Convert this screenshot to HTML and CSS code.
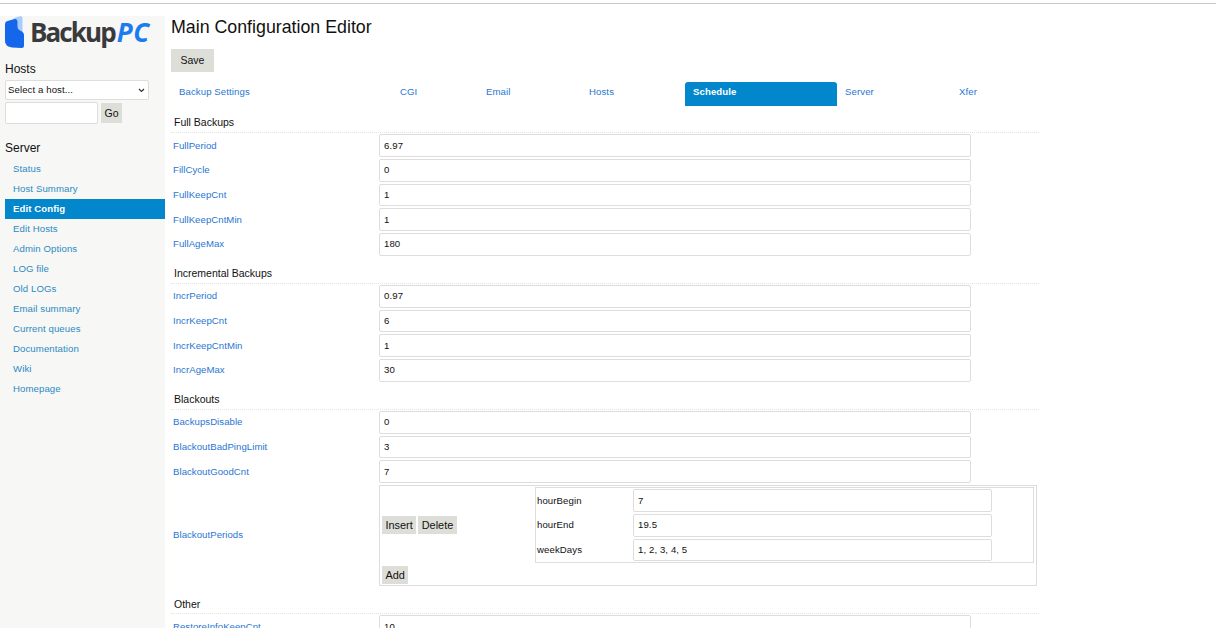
FILE: index.html
```html
<!DOCTYPE html>
<html lang="en">
<head>
<meta charset="utf-8">
<title>Main Configuration Editor</title>
<link rel="stylesheet" href="styles.css">
</head>
<body>
<div class="layout">
  <aside class="sidebar">
    <div class="logo">
      <svg class="logo-icon" width="20" height="33" viewBox="0 0 20 33">
        <path fill="#a9cdfb" d="M9 2 L15 .3 Q17.5 -.3 17.5 2 L17.5 16 L9 16z"/>
        <path fill="#1467ea" d="M0 8 Q0 5.5 2.5 5 L9.5 3 Q12.5 2.5 12.5 5.5 L12.5 11 Q12.5 13.5 15 14.5 L17 15.5 Q19 16.5 19 19 L19 29.5 Q19 32 16.5 32 L7 31.5 Q0 30.5 0 25z"/>
      </svg>
      <span class="logo-text">Backup<em>PC</em></span>
    </div>
    <h2 class="side-title">Hosts</h2>
    <select class="host-select"><option>Select a host...</option></select>
    <div class="host-go">
      <input class="host-input" type="text">
      <button class="btn go">Go</button>
    </div>
    <h2 class="side-title server">Server</h2>
    <nav class="nav">
      <a href="#">Status</a>
      <a href="#">Host Summary</a>
      <a href="#" class="active">Edit Config</a>
      <a href="#">Edit Hosts</a>
      <a href="#">Admin Options</a>
      <a href="#">LOG file</a>
      <a href="#">Old LOGs</a>
      <a href="#">Email summary</a>
      <a href="#">Current queues</a>
      <a href="#">Documentation</a>
      <a href="#">Wiki</a>
      <a href="#">Homepage</a>
    </nav>
  </aside>
  <main class="main">
    <h1 class="title">Main Configuration Editor</h1>
    <button class="btn save">Save</button>
    <div class="tabs">
      <a href="#">Backup Settings</a>
      <a href="#">CGI</a>
      <a href="#">Email</a>
      <a href="#">Hosts</a>
      <a href="#" class="active">Schedule</a>
      <a href="#">Server</a>
      <a href="#">Xfer</a>
    </div>

    <h3 class="section first">Full Backups</h3>
    <div class="row"><a href="#">FullPeriod</a><input value="6.97"></div>
    <div class="row"><a href="#">FillCycle</a><input value="0"></div>
    <div class="row"><a href="#">FullKeepCnt</a><input value="1"></div>
    <div class="row"><a href="#">FullKeepCntMin</a><input value="1"></div>
    <div class="row"><a href="#">FullAgeMax</a><input value="180"></div>

    <h3 class="section">Incremental Backups</h3>
    <div class="row"><a href="#">IncrPeriod</a><input value="0.97"></div>
    <div class="row"><a href="#">IncrKeepCnt</a><input value="6"></div>
    <div class="row"><a href="#">IncrKeepCntMin</a><input value="1"></div>
    <div class="row"><a href="#">IncrAgeMax</a><input value="30"></div>

    <h3 class="section">Blackouts</h3>
    <div class="row"><a href="#">BackupsDisable</a><input value="0"></div>
    <div class="row"><a href="#">BlackoutBadPingLimit</a><input value="3"></div>
    <div class="row"><a href="#">BlackoutGoodCnt</a><input value="7"></div>
    <div class="row tall">
      <a href="#">BlackoutPeriods</a>
      <div class="periods">
        <div class="period">
          <div class="period-actions">
            <button class="btn small">Insert</button>
            <button class="btn small">Delete</button>
          </div>
          <div class="period-fields">
            <div class="field"><span>hourBegin</span><input value="7"></div>
            <div class="field"><span>hourEnd</span><input value="19.5"></div>
            <div class="field"><span>weekDays</span><input value="1, 2, 3, 4, 5"></div>
          </div>
        </div>
        <button class="btn small add">Add</button>
      </div>
    </div>

    <h3 class="section">Other</h3>
    <div class="row"><a href="#">RestoreInfoKeepCnt</a><input value="10"></div>
  </main>
</div>
</body>
</html>
```
FILE: styles.css
```css
* { box-sizing: border-box; }
html, body { height: 100%; }
body {
  margin: 0;
  overflow: hidden;
  background: #fff;
  color: #111;
  font-family: "Liberation Sans", Arial, sans-serif;
  font-size: 10px;
}
body::before {
  content: "";
  display: block;
  height: 3px;
  background: #fff;
  border-bottom: 1px solid #c9c9c9;
}
.layout { display: flex; align-items: flex-start; height: 100%; }
a { color: #2a76d2; text-decoration: none; }

.sidebar {
  flex: none;
  width: 165px;
  height: 612px;
  margin-top: 12px;
  padding-left: 5px;
  background: #f7f7f5;
}
.logo { display: flex; align-items: center; height: 33px; }
.logo-icon { flex: none; }
.logo-text {
  margin-left: 5px;
  font-family: "Open Sans", sans-serif;
  font-weight: 700;
  font-size: 26px;
  letter-spacing: -1.9px;
  line-height: 33px;
  color: #3a3a3c;
}
.logo-text em {
  margin-left: 2px;
  letter-spacing: .5px;
  color: #1a7cf0;
  font-weight: 700;
}
.side-title {
  margin: 13px 0 3px;
  font-size: 12px;
  font-weight: 400;
  line-height: 15px;
  color: #111;
}
.side-title.server { margin: 17px 0 3px; }
.host-select {
  display: block;
  appearance: none;
  width: 144px;
  height: 20px;
  padding: 0 0 1px 2px;
  background: #fff url("data:image/svg+xml,%3Csvg xmlns='http://www.w3.org/2000/svg' width='7' height='5'%3E%3Cpath d='M1 1l2.5 2.5L6 1' fill='none' stroke='%23333' stroke-width='1.2'/%3E%3C/svg%3E") no-repeat right 3px center;
  border: 1px solid #ddd;
  border-radius: 2px;
  font-family: "Liberation Sans", sans-serif;
  font-size: 9.6px;
  letter-spacing: .1px;
  color: #111;
}
.host-go { display: flex; align-items: center; gap: 3px; margin-top: 2px; }
.host-input {
  width: 93px;
  height: 22px;
  background: #fff;
  border: 1px solid #ddd;
  border-radius: 2px;
}
.btn {
  border: 0;
  background: #deded9;
  color: #111;
  font-family: "Liberation Sans", sans-serif;
  padding: 0;
}
.btn.go { width: 21px; height: 20px; font-size: 10.5px; }
.nav { display: flex; flex-direction: column; }
.nav a {
  display: block;
  height: 20px;
  padding-left: 8px;
  line-height: 20px;
  font-size: 9.6px;
  letter-spacing: .1px;
  color: #2b8bc4;
}
.nav a.active { background: #0286cc; color: #fff; font-weight: 700; }

.main { flex: none; width: 868px; margin-left: 6px; padding-top: 11px; }
.title {
  margin: 0;
  font-size: 17.8px;
  font-weight: 400;
  line-height: 24px;
  color: #111;
}
.save {
  display: block;
  width: 43px;
  height: 23px;
  margin-top: 10px;
  padding-bottom: 1px;
  font-size: 10.5px;
}
.tabs {
  display: grid;
  grid-template-columns: 221px 86px 103px 104px 152px 114px 1fr;
  height: 24px;
  margin-top: 10px;
}
.tabs a {
  padding: 4px 8px;
  line-height: 12px;
  font-size: 9.6px;
  letter-spacing: .1px;
}
.tabs a.active {
  background: #0286cc;
  color: #fff;
  font-weight: 700;
  border-radius: 3px 3px 0 0;
}
.section {
  display: block;
  height: 26.33px;
  padding: 8.7px 0 0 3px;
  margin: 0 0 1px;
  font-size: 10.5px;
  font-weight: 400;
  line-height: 14px;
  color: #111;
  border-bottom: 1px dotted #e4e4e4;
}
.section.first { height: 27.3px; }
.row {
  display: grid;
  grid-template-columns: 208px 592px;
  align-items: center;
  height: 24.67px;
  padding-bottom: 2px;
  font-size: 9.6px;
  letter-spacing: .05px;
  width: 868px;
}
.row > a { padding-left: 2px; margin-bottom: .8px; }
.row input, .field input {
  width: 100%;
  height: 22.67px;
  padding: 0 4px .8px;
  border: 1px solid #ddd;
  border-radius: 2px;
  background: #fff;
  color: #111;
  font-family: "Liberation Sans", sans-serif;
  font-size: 9.6px;
  letter-spacing: .1px;
  outline: 0;
}
.row.tall {
  grid-template-columns: 208px 658px;
  height: 103px;
  padding-bottom: 2px;
}
.periods {
  height: 101px;
  padding: 1px 2px 0 2px;
  border: 1px solid #ddd;
  display: flex;
  flex-direction: column;
  align-items: flex-start;
}
.period {
  display: flex;
  align-items: center;
  width: 100%;
  height: 76px;
  flex: none;
}
.period-actions { display: flex; gap: 2px; width: 153px; flex: none; }
.btn.small { height: 18px; padding: 0 3.5px; font-size: 10.9px; }
.period-fields {
  flex: none;
  width: 499px;
  height: 76px;
  border: 1px solid #ddd;
  padding: 1.5px 0 0 1px;
}
.field {
  display: grid;
  grid-template-columns: 96px 359px;
  align-items: center;
  height: 24.67px;
  padding-bottom: 2px;
}
.field span { color: #111; font-size: 9.6px; letter-spacing: .1px; margin-bottom: .8px; }
.btn.add { margin-top: 3px; }
```
